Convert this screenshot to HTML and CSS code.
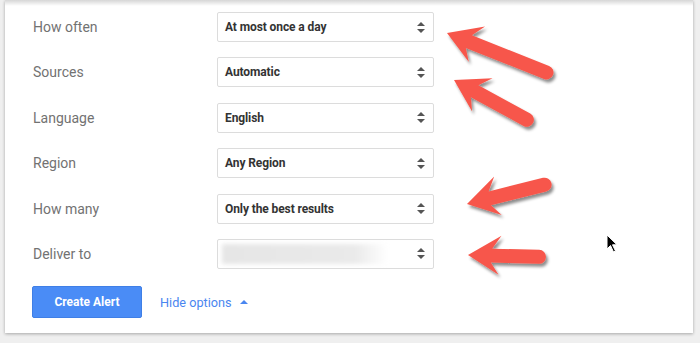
FILE: index.html
```html
<!DOCTYPE html>
<html>
<head>
<meta charset="utf-8">
<link rel="stylesheet" href="styles.css">
</head>
<body>
<div class="card">
  <div class="form">
    <div class="row"><div class="label">How often</div><div class="select"><span class="val">At most once a day</span><span class="updown"></span></div></div>
    <div class="row"><div class="label">Sources</div><div class="select"><span class="val">Automatic</span><span class="updown"></span></div></div>
    <div class="row"><div class="label">Language</div><div class="select"><span class="val">English</span><span class="updown"></span></div></div>
    <div class="row"><div class="label">Region</div><div class="select"><span class="val">Any Region</span><span class="updown"></span></div></div>
    <div class="row"><div class="label">How many</div><div class="select"><span class="val">Only the best results</span><span class="updown"></span></div></div>
    <div class="row"><div class="label">Deliver to</div><div class="select"><span class="blur"></span><span class="updown"></span></div></div>
    <div class="actions">
      <button class="create">Create Alert</button>
      <span class="hide">Hide options <span class="caret"></span></span>
    </div>
  </div>
</div>
<svg class="arrows" width="700" height="343" viewBox="0 0 700 343">
  <defs>
    <filter id="sh" x="-20%" y="-40%" width="150%" height="190%">
      <feDropShadow dx="2" dy="3" stdDeviation="1.8" flood-color="#000" flood-opacity="0.45"/>
    </filter>
  </defs>
  <g fill="#f7574b" filter="url(#sh)">
    <g transform="translate(447,33) rotate(21.6)">
      <path d="M0 0 L33 -20 L24 -7 L107 -7 A7 7 0 0 1 107 7 L23 7 L31 19 Z"/>
    </g>
    <g transform="translate(454,80) rotate(28.6)">
      <path d="M0 0 L33 -20 L24 -7 L83 -7 A7 7 0 0 1 83 7 L23 7 L31 19 Z"/>
    </g>
    <g transform="translate(467,204) rotate(-14)">
      <path d="M0 0 L33 -20 L24 -7 L80 -7 A7 7 0 0 1 80 7 L23 7 L31 19 Z"/>
    </g>
    <g transform="translate(468,255) rotate(1.5)">
      <path d="M0 0 L33 -20 L24 -7 L71 -7 A7 7 0 0 1 71 7 L23 7 L31 19 Z"/>
    </g>
  </g>
</svg>
<svg class="cursor" width="14" height="20" viewBox="0 0 14 20">
  <path d="M1 1 L1 15 L4.5 11.5 L7.5 18 L9.5 17 L6.5 10.8 L11 10.8 Z" fill="#000" stroke="#fff" stroke-width="1"/>
</svg>
</body>
</html>
```
FILE: styles.css
```css
html, body {
  margin: 0;
  padding: 0;
}
body {
  width: 700px;
  height: 343px;
  background: #efefef;
  position: relative;
  overflow: hidden;
  font-family: Roboto, "Liberation Sans", Arial, sans-serif;
}
.card {
  margin-left: 5px;
  width: 688px;
  height: 333px;
  background: #fff;
  box-shadow: 0 1px 3px rgba(0,0,0,0.3);
  background-image: linear-gradient(to bottom, rgba(0,0,0,0.16), rgba(0,0,0,0) 6px);
}
.form {
  padding: 12px 0 0 28px;
  display: flex;
  flex-direction: column;
  gap: 15.4px;
}
.row {
  display: flex;
  align-items: center;
  height: 30px;
}
.label {
  width: 184px;
  font-size: 14px;
  color: #727272;
}
.select {
  box-sizing: border-box;
  width: 217px;
  height: 30px;
  border: 1px solid #dcdcdc;
  border-radius: 2px;
  display: flex;
  align-items: center;
  padding: 0 6px 0 7px;
  position: relative;
}
.val {
  flex: 1;
  font-size: 12px;
  font-weight: bold;
  color: #333;
  letter-spacing: -0.1px;
}
.blur {
  flex: none;
  width: 166px;
  height: 20px;
  margin-left: -3px;
  background: linear-gradient(to right, #e6e6e6 0%, #eaeaea 80%, #fff 100%);
  filter: blur(2px);
  margin-right: auto;
}
.updown {
  width: 8px;
  height: 11px;
  margin-right: 2px;
  position: relative;
}
.updown::before, .updown::after {
  content: "";
  position: absolute;
  left: 0;
  border-left: 4px solid transparent;
  border-right: 4px solid transparent;
}
.updown::before {
  top: 0;
  border-bottom: 4px solid #555;
}
.updown::after {
  bottom: 0;
  border-top: 4px solid #555;
}
.actions {
  display: flex;
  align-items: center;
  margin-top: 2px;
  margin-left: -1px;
}
.create {
  width: 110px;
  height: 32px;
  background: #4a8cf6;
  border: 1px solid #3f7fe6;
  border-radius: 2px;
  color: #fff;
  font-family: Roboto, "Liberation Sans", Arial, sans-serif;
  font-size: 12px;
  font-weight: bold;
  padding: 0;
}
.hide {
  margin-left: 18px;
  font-size: 12.7px;
  color: #4a86f0;
  display: flex;
  align-items: center;
}
.caret {
  display: inline-block;
  margin-left: 8px;
  border-left: 4px solid transparent;
  border-right: 4px solid transparent;
  border-bottom: 4px solid #4a86f0;
}
.arrows {
  position: absolute;
  left: 0;
  top: 0;
  pointer-events: none;
}
.cursor {
  position: absolute;
  left: 606px;
  top: 234px;
}
```
